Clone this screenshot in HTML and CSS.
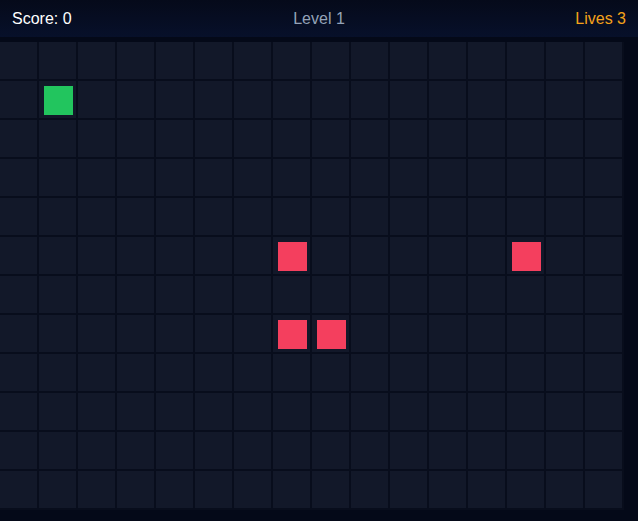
FILE: index.html
```html
<!DOCTYPE html>
<html lang="en">
<head>
    <meta charset="UTF-8">
    <meta name="viewport" content="width=device-width, initial-scale=1.0">
    <title>Grid Runner</title>
    <link rel="stylesheet" href="styles.css">
</head>
<body>
    <div id="hud">
        <div id="score">Score: 0</div>
        <div id="level">Level 1</div>
        <div id="lives">Lives 3</div>
    </div>
    <div id="board"></div>
    <script>
        const COLS = 16;
        const ROWS = 12;
        const board = document.getElementById('board');

        // player and enemy positions as [col, row]
        const player = [1, 1];
        const enemies = [[7, 5], [13, 5], [7, 7], [8, 7]];

        for (let r = 0; r < ROWS; r++) {
            for (let c = 0; c < COLS; c++) {
                const cell = document.createElement('div');
                cell.className = 'cell';
                if (player[0] === c && player[1] === r) {
                    cell.innerHTML = '<div class="piece player"></div>';
                } else if (enemies.some(e => e[0] === c && e[1] === r)) {
                    cell.innerHTML = '<div class="piece enemy"></div>';
                }
                board.appendChild(cell);
            }
        }
    </script>
</body>
</html>
```

FILE: styles.css
```css
body {
    margin: 0;
    padding: 0;
    font-family: "Liberation Sans", Arial, sans-serif;
    background: #040918;
    color: #fff;
    min-height: 521px;
}
#hud {
    height: 37px;
    padding: 0 12px;
    display: grid;
    grid-template-columns: 1fr auto 1fr;
    align-items: center;
    font-size: 16px;
    background: linear-gradient(to bottom, #050a1a, #07102a);
}
#level {
    color: #94a3b8;
    text-align: center;
}
#lives {
    color: #f5a21a;
    text-align: right;
}
#board {
    margin-top: 5px;
    width: 622px;
    padding: 0 2px 2px 0;
    display: grid;
    grid-template-columns: repeat(16, 37px);
    grid-auto-rows: 37px;
    gap: 2px;
    background: #080d1c;
}
.cell {
    background: #121829;
}
.piece {
    width: 29px;
    height: 29px;
    margin: 5px 0 0 5px;
}
.player {
    background: #22c55e;
}
.enemy {
    background: #f43f5e;
}
```
